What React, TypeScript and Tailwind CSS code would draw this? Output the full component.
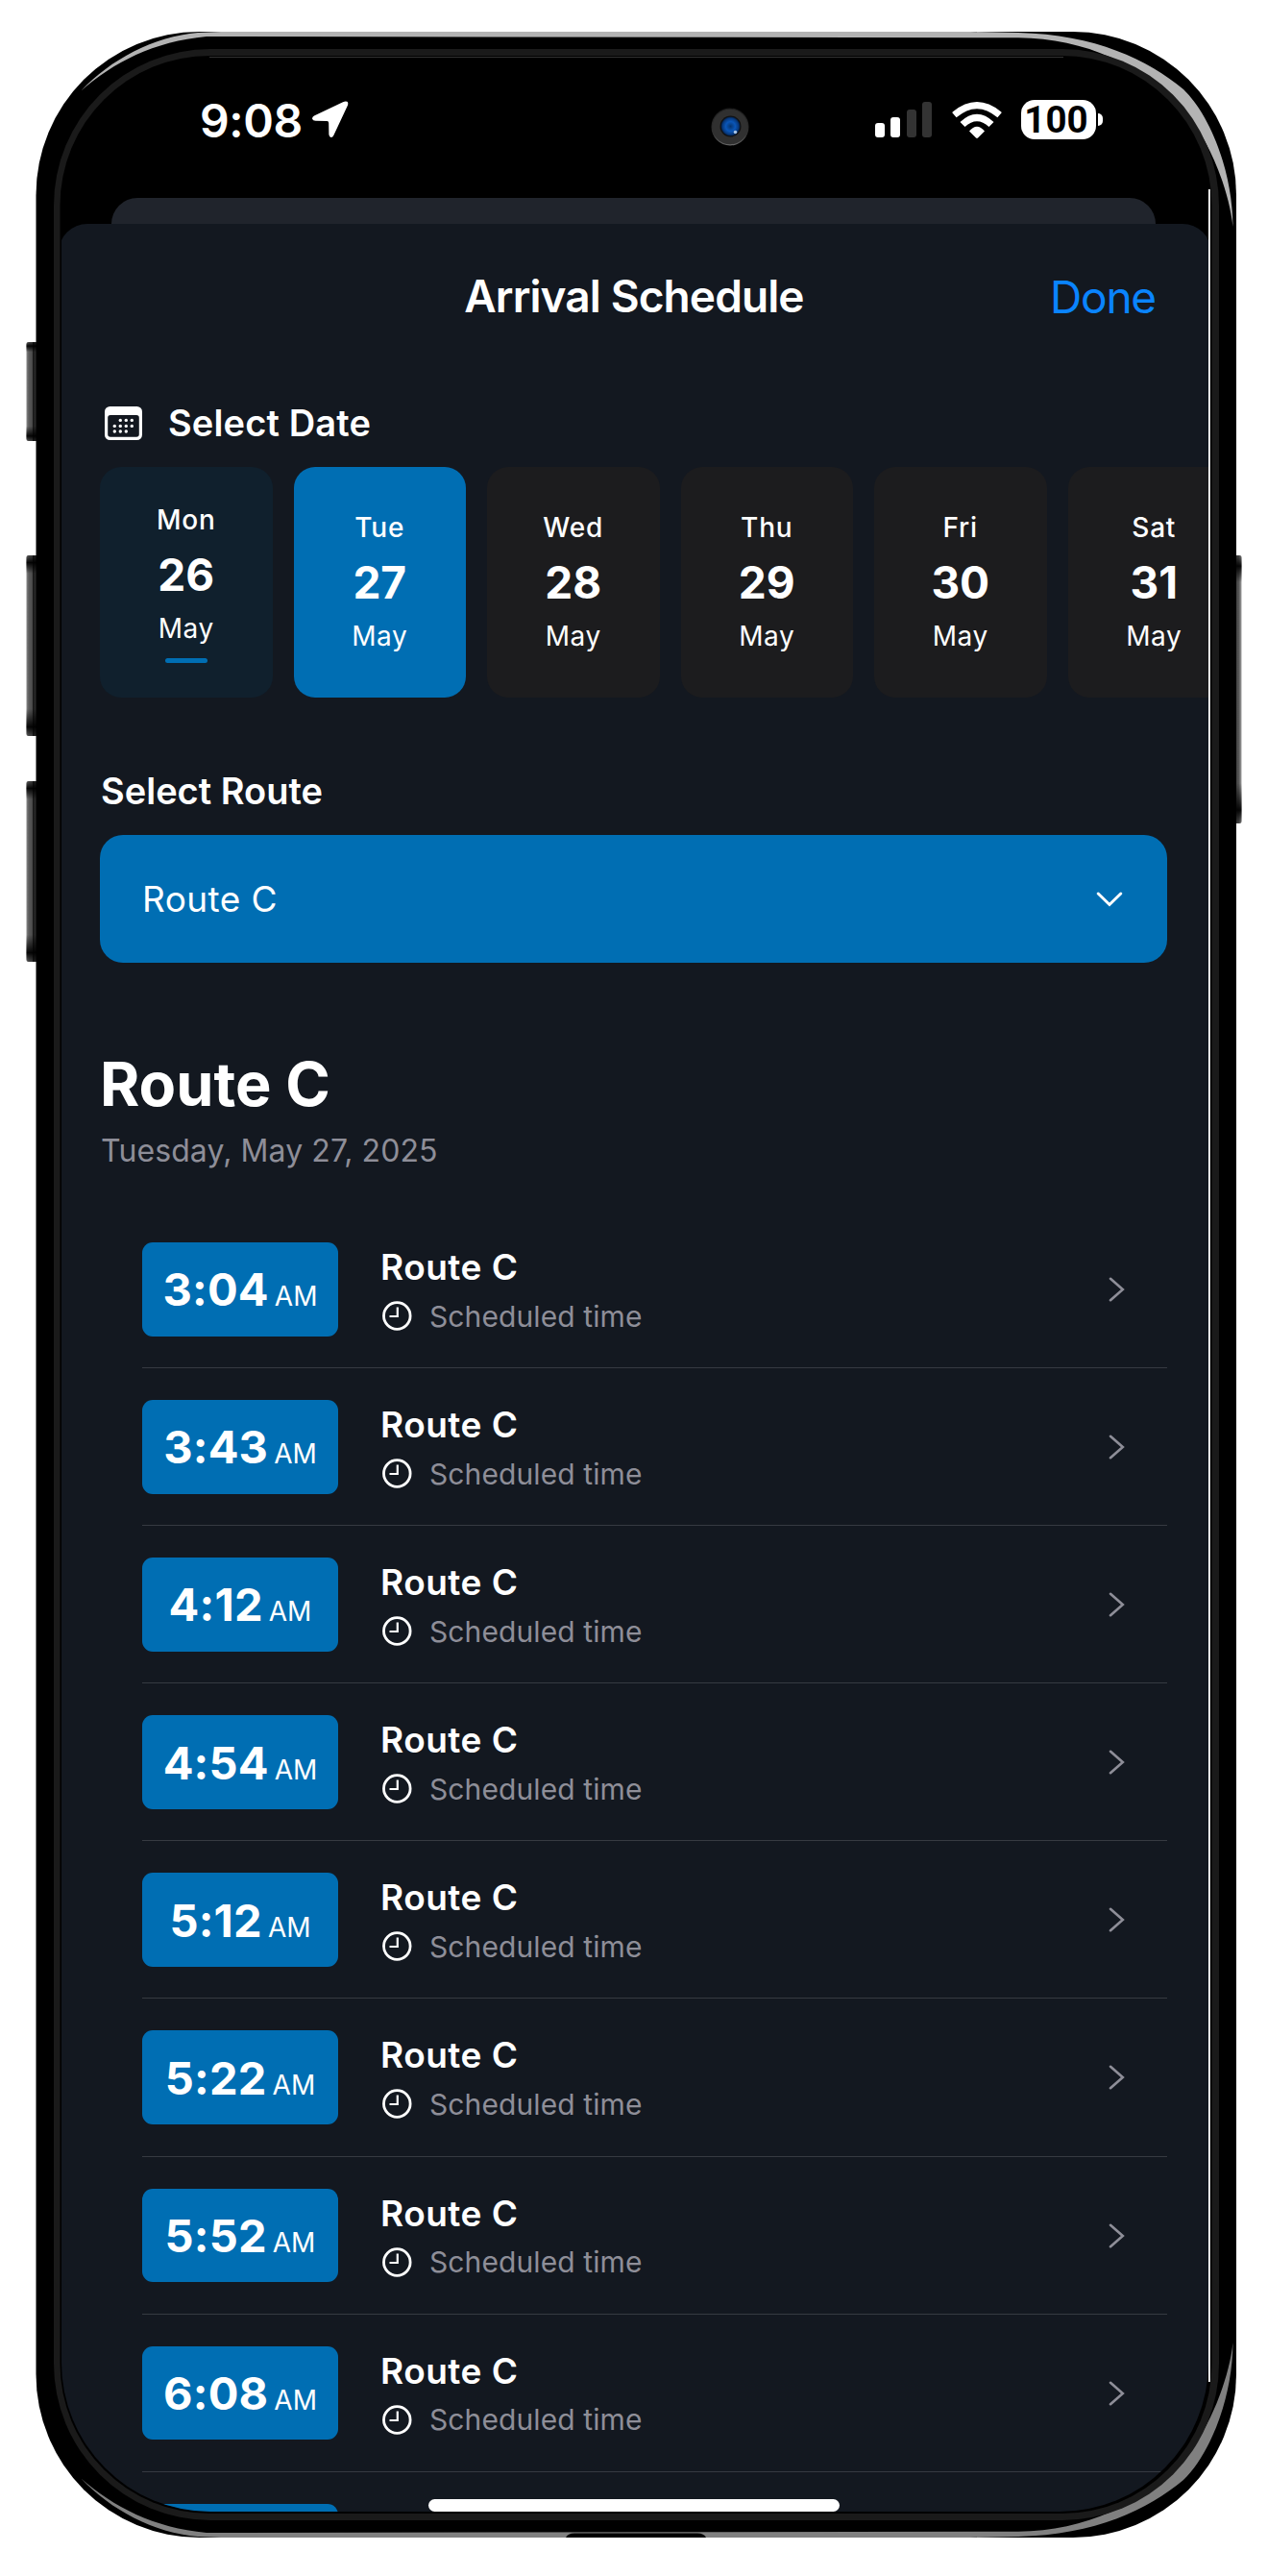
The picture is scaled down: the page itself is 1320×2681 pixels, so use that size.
interface DateOption {
  day: string;
  date: number;
  isToday?: boolean;
}

const dates: DateOption[] = [
  { day: 'Mon', date: 26, isToday: true },
  { day: 'Tue', date: 27 },
  { day: 'Wed', date: 28 },
  { day: 'Thu', date: 29 },
  { day: 'Fri', date: 30 },
  { day: 'Sat', date: 31 },
];

const arrivals = ['3:04', '3:43', '4:12', '4:54', '5:12', '5:22', '5:52', '6:08'];

const selectedDate = 27;

// Metal edge highlight, drawn once for the top and flipped for the bottom
function EdgeHighlight() {
  return (
    <path d="M206 34 C160 38 115 62 84.5 94.5 C118 65 160 43 215 38 L1060 39.3 C1130 40 1190 68 1233 115 C1258 145 1279 195 1283.5 236 C1283 175 1258 118 1232 93 C1195 62 1140 36 1060 34 L1010 33 H230 Z" />
  );
}

function SideButton({ x, y, width, height, flip }: { x: number; y: number; width: number; height: number; flip?: boolean }) {
  return (
    <g>
      <rect x={x} y={y} width={width} height={height} rx="2" fill={flip ? 'url(#buttonRight)' : 'url(#buttonLeft)'} />
      <rect x={x} y={y} width={width} height={height} rx="2" fill="url(#buttonCaps)" />
    </g>
  );
}

function PhoneFrame() {
  return (
    <svg className="absolute inset-0" width="1320" height="2681" viewBox="0 0 1320 2681">
      <defs>
        <linearGradient id="buttonLeft" x1="0" x2="1" y1="0" y2="0">
          <stop offset="0" stopColor="#8a8a8a" />
          <stop offset="0.2" stopColor="#5c5c5c" />
          <stop offset="0.5" stopColor="#4a4a4a" />
          <stop offset="0.55" stopColor="#161616" />
          <stop offset="1" stopColor="#3a3a3a" />
        </linearGradient>
        <linearGradient id="buttonRight" x1="0" x2="1" y1="0" y2="0">
          <stop offset="0" stopColor="#333333" />
          <stop offset="0.6" stopColor="#555555" />
          <stop offset="1" stopColor="#a0a0a0" />
        </linearGradient>
        <linearGradient id="buttonCaps" x1="0" x2="0" y1="0" y2="1">
          <stop offset="0" stopColor="#000" stopOpacity="0.2" />
          <stop offset="0.04" stopColor="#000" stopOpacity="0.95" />
          <stop offset="0.1" stopColor="#000" stopOpacity="0" />
          <stop offset="0.85" stopColor="#000" stopOpacity="0" />
          <stop offset="0.95" stopColor="#000" stopOpacity="0.95" />
          <stop offset="1" stopColor="#000" stopOpacity="0.2" />
        </linearGradient>
      </defs>

      <SideButton x={27.5} y={356} width={12} height={103} />
      <SideButton x={27.5} y={578} width={12} height={188} />
      <SideButton x={27.5} y={813} width={12} height={188} />
      <SideButton x={1285} y={578} width={7.5} height={279} flip />

      <rect x="37.5" y="33" width="1249.5" height="2608" rx="170" fill="#000" />
      <g fill="#b3b3b3">
        <EdgeHighlight />
      </g>
      <g fill="#808080" transform="translate(0 2674) scale(1 -1)">
        <EdgeHighlight />
      </g>
      <path d="M589 2641 Q591 2636.5 598 2636.5 H726 Q733 2636.5 735 2641 Z" fill="#000" />

      <rect x="56" y="51" width="1213" height="2572" rx="163" fill="#1a1a1a" />
      <rect x="62.5" y="58" width="1199" height="2558" rx="156" fill="#000" />
      <path d="M218 59.5 H1107" stroke="#333" strokeWidth="1" />
      <rect x="1258" y="197" width="1.8" height="2282" fill="#fff" />
    </svg>
  );
}

function StatusBar() {
  return (
    <div className="flex h-[129px] shrink-0 items-center justify-between pl-[144px] pr-[110px]">
      <div className="flex items-center gap-[10px]">
        <span className="mt-[2px] text-[48px] leading-[48px] font-semibold tracking-[-0.4px]">9:08</span>
        <svg width="38" height="39" viewBox="0 0 38 39" fill="currentColor">
          <path d="M32 1.2 L2 15.5 Q-0.5 17 0.2 19 Q0.8 20.8 3.5 20.8 L15.5 21 Q17.2 21 17.2 23 L17.4 35 Q17.8 37.8 19.6 38 Q21.4 38 22.4 35.8 L36.8 5 Q38 2 36.4 0.8 Q34.6 0 32 1.2 Z" />
        </svg>
      </div>
      <div className="flex items-center">
        <svg width="59" height="37" viewBox="0 0 59 37">
          <rect x="0" y="22" width="10" height="15" rx="3" fill="#fff" />
          <rect x="16" y="16" width="10" height="21" rx="3" fill="#fff" />
          <rect x="33" y="8" width="10" height="29" rx="3" fill="#333" />
          <rect x="49" y="0" width="10" height="37" rx="3" fill="#333" />
        </svg>
        <svg className="ml-[21px]" width="52" height="38" viewBox="0 0 52 38" fill="currentColor">
          <path d="M0.5 11.6 Q0 11 1 10.2 Q26 -10.2 51 10.2 Q52 11 51.5 11.6 L47.4 16.3 Q26 -2 4.6 16.3 Z" />
          <path d="M8.5 21 Q26 4.5 43.5 21 L38.5 26 Q26 14.5 13.5 26 Z" />
          <path d="M18 30.5 Q26 21 34 30.5 L27 37.5 Q26 38.3 25 37.5 Z" />
        </svg>
        <div className="ml-5 flex h-[41px] w-[78px] items-center justify-center rounded-[14px] bg-white font-['Roboto',sans-serif] text-[38.5px] leading-[41px] font-bold text-black">
          <span className="pr-[5px]">100</span>
        </div>
        <div className="ml-[2px] h-[13px] w-[5px] rounded-r-full bg-white" />
      </div>
    </div>
  );
}

function Camera() {
  return (
    <svg className="absolute top-[52px] left-[676px]" width="40" height="40" viewBox="0 0 40 40">
      <defs>
        <linearGradient id="cameraRing" x1="0" x2="0" y1="0" y2="1">
          <stop offset="0" stopColor="#1c1c1c" />
          <stop offset="0.7" stopColor="#333" />
          <stop offset="1" stopColor="#6a6a6a" />
        </linearGradient>
        <radialGradient id="cameraLens" cx="0.5" cy="0.5" r="0.55">
          <stop offset="0" stopColor="#06346f" />
          <stop offset="0.45" stopColor="#0a56b8" />
          <stop offset="0.75" stopColor="#073a80" />
          <stop offset="1" stopColor="#020a18" />
        </radialGradient>
      </defs>
      <circle cx="20" cy="20" r="19.5" fill="url(#cameraRing)" />
      <circle cx="20" cy="20" r="18.3" fill="#303030" />
      <circle cx="20.5" cy="19.5" r="11" fill="#121212" />
      <circle cx="20.5" cy="19.5" r="10" fill="url(#cameraLens)" />
      <circle cx="25.5" cy="25.5" r="1.8" fill="#a9c4e4" />
    </svg>
  );
}

function CalendarIcon() {
  return (
    <svg width="39" height="35" viewBox="0 0 39 35">
      <rect width="39" height="35" rx="5.5" fill="#fff" />
      <rect x="3.2" y="9" width="32.6" height="22.8" rx="2.8" fill="#131820" />
      <g fill="#fff">
        <circle cx="16.3" cy="14.4" r="1.7" />
        <circle cx="22.3" cy="14.4" r="1.7" />
        <circle cx="28.3" cy="14.4" r="1.7" />
        <circle cx="10.3" cy="20.4" r="1.7" />
        <circle cx="16.3" cy="20.4" r="1.7" />
        <circle cx="22.3" cy="20.4" r="1.7" />
        <circle cx="28.3" cy="20.4" r="1.7" />
        <circle cx="10.3" cy="26" r="1.7" />
        <circle cx="16.3" cy="26" r="1.7" />
        <circle cx="22.3" cy="26" r="1.7" />
      </g>
    </svg>
  );
}

function DateCard({ option }: { option: DateOption }) {
  let background = 'bg-[#1c1c1e]';
  if (option.date === selectedDate) {
    background = 'bg-[#006eb3]';
  } else if (option.isToday) {
    background = 'bg-[#10202d]';
  }

  return (
    <button className={`flex h-[240px] w-[179.5px] shrink-0 flex-col items-center justify-center rounded-[22px] pb-[2px] ${background}`}>
      <span className="text-[28px] leading-[28px] font-medium tracking-[0.8px]">{option.day}</span>
      <span className="mt-5 text-[46px] leading-[46px] font-bold">{option.date}</span>
      <span className="mt-[19px] text-[28px] leading-[28px] tracking-[0.6px]">May</span>
      {option.isToday && <span className="mt-[17px] mb-[-6px] h-[5px] w-11 rounded-full bg-[#006eb3]" />}
    </button>
  );
}

function ArrivalRow({ time }: { time: string }) {
  return (
    <li className="flex h-[164.1px] shrink-0 items-start border-b border-[#363a41] pt-[33px]">
      <div className="flex h-[97.5px] w-[204px] items-center justify-center rounded-[11px] bg-[#006eb3]">
        <div className="flex items-baseline gap-[6px]">
          <span className="text-[47px] leading-[47px] font-bold tracking-[0.2px]">{time}</span>
          <span className="text-[28px] leading-[28px]">AM</span>
        </div>
      </div>
      <div className="ml-11 flex flex-1 flex-col pt-[7px]">
        <span className="text-[37px] leading-[37px] font-semibold tracking-[0.5px]">Route C</span>
        <div className="mt-[17px] flex items-center gap-[18px] pl-[2px]">
          <svg width="31" height="31" viewBox="0 0 31 31" fill="none" stroke="#fff">
            <circle cx="15.3" cy="15.5" r="13.8" strokeWidth="2.8" />
            <path d="M15.8 6.5 V16 H7.5" strokeWidth="2.2" />
          </svg>
          <span className="text-[30px] leading-[30px] tracking-[0.1px] text-[#8e8e98]">Scheduled time</span>
        </div>
      </div>
      <svg className="mt-[36px] mr-[44px]" width="17" height="26" viewBox="0 0 17 26" fill="none" stroke="#8e8e98" strokeWidth="2.6" strokeLinecap="round">
        <path d="M2 1.8 L14.8 13 L2 24.2" />
      </svg>
    </li>
  );
}

export default function App() {
  return (
    <div className="relative h-[2681px] w-[1320px] overflow-hidden bg-white pt-[60px] pl-[64px] font-['Inter',sans-serif] text-white">
      <PhoneFrame />

      <div className="relative flex h-[2554px] w-[1194px] flex-col overflow-hidden rounded-[155px] bg-black">
        <StatusBar />
        <Camera />

        <div className="mt-[17px] mr-[55px] ml-[52px] h-[27px] shrink-0 rounded-t-[27px] bg-[#20242c]" />

        <div className="mx-[-3px] flex flex-1 flex-col overflow-hidden rounded-t-[30px] bg-[#131820]">
          <div className="grid shrink-0 grid-cols-[1fr_auto_1fr] pt-[52px] pr-[58px] pl-[56px]">
            <h1 className="col-start-2 text-[46px] leading-[46px] font-semibold tracking-[-0.9px]">Arrival Schedule</h1>
            <button className="mt-[1px] justify-self-end text-[46px] leading-[46px] tracking-[-1.2px] text-[#0a84ff]">Done</button>
          </div>

          <div className="mt-[89px] flex shrink-0 items-center gap-[27px] pl-12">
            <CalendarIcon />
            <h2 className="text-[38px] leading-[38px] font-semibold tracking-[0.15px]">Select Date</h2>
          </div>
          <div className="mt-[27px] flex shrink-0 gap-[22px] pl-[43px]">
            {dates.map((option) => (
              <DateCard key={option.date} option={option} />
            ))}
          </div>

          <h2 className="mt-[78px] pl-[44px] text-[38px] leading-[38px] font-semibold">Select Route</h2>
          <button className="mt-[27px] mr-[46px] ml-[43px] flex h-[133px] shrink-0 items-center justify-between rounded-[24px] bg-[#006eb3] pr-[46px] pl-[44px]">
            <span className="text-[37px] leading-[37px] tracking-[0.4px]">Route C</span>
            <svg width="28" height="17" viewBox="0 0 28 17" fill="none" stroke="#fff" strokeWidth="3" strokeLinecap="round">
              <path d="M2.2 3 L14 14.5 L25.8 3" />
            </svg>
          </button>

          <h2 className="mt-[95px] pl-[43px] text-[63px] leading-[63px] font-bold">Route C</h2>
          <p className="mt-[22px] pl-[44px] text-[32px] leading-[32px] tracking-[0.1px] text-[#8e8e98]">Tuesday, May 27, 2025</p>

          <ul className="mt-[46px] mr-[46px] ml-[87px] flex flex-col">
            {arrivals.map((time) => (
              <ArrivalRow key={time} time={time} />
            ))}
            {/* top edge of the next badge, the rest is scrolled out of view */}
            <li className="pt-[33px]">
              <div className="h-[97.5px] w-[204px] rounded-[11px] bg-[#006eb3]" />
            </li>
          </ul>
        </div>

        <div className="absolute bottom-0 left-[382px] h-[13px] w-[428px] rounded-full bg-white" />
      </div>
    </div>
  );
}
